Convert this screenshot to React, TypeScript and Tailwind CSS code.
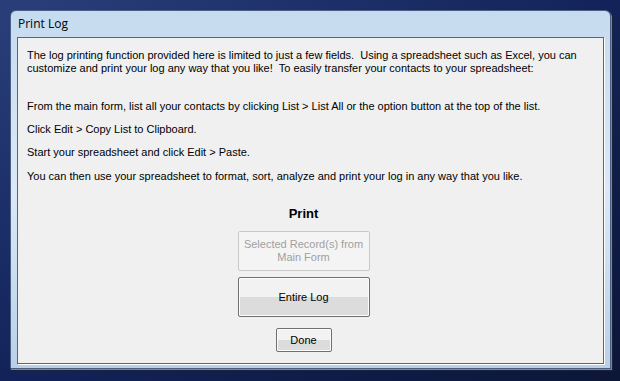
import React from 'react';

export default function App() {
  return (
    <div className="w-[620px] h-[381px] overflow-hidden bg-gradient-to-br from-[#2a3f7a] via-[#13235a] to-[#0b1638] pl-[10px] pt-[10px] font-['Liberation_Sans',Arial,sans-serif]">
      <div className="w-[601px] h-[359px] rounded-t-[6px] bg-gradient-to-b from-[#c6dbef] via-[#dbe9f6] to-[#b9d0e8] border border-[#4a5f86] shadow-[1px_1px_0_#8a8a6a,2px_2px_0_#1d2238] flex flex-col px-[6px] pb-[4px]">
        <div className="h-[26px] flex items-center pl-[1px] text-[12px] text-black font-['Open_Sans','Liberation_Sans',sans-serif]">
          Print Log
        </div>
        <div className="flex-1 border border-[#646464] shadow-[1px_1px_0_#ffffff] bg-[#f0f0f0] pl-[9px] pr-[4px] pt-[11px] text-[11px] text-black">
          <p className="leading-[13px]">
            The log printing function provided here is limited to just a few fields.&nbsp; Using a spreadsheet such as Excel, you can customize and print your log any way that you like!&nbsp; To easily transfer your contacts to your spreadsheet:
          </p>
          <p className="mt-[25px] leading-[13px]">
            From the main form, list all your contacts by clicking List &gt; List All or the option button at the top of the list.
          </p>
          <p className="mt-[10px] leading-[13px]">Click Edit &gt; Copy List to Clipboard.</p>
          <p className="mt-[10px] leading-[13px]">Start your spreadsheet and click Edit &gt; Paste.</p>
          <p className="mt-[11px] leading-[13px]">
            You can then use your spreadsheet to format, sort, analyze and print your log in any way that you like.
          </p>
          <div className="flex flex-col items-center mt-[23px] -ml-[5px] mr-[14px]">
            <div className="text-[13px] font-bold leading-[16px]">Print</div>
            <button
              disabled
              className="mt-[9px] w-[132px] h-[40px] px-0 rounded-[2px] border border-[#c9c9c9] bg-[#f4f4f4] text-[11px] leading-[13px] text-[#a0a0a0]"
            >
              Selected Record(s) from
              <br />
              Main Form
            </button>
            <button className="mt-[6px] w-[132px] h-[40px] rounded-[2px] border border-[#707070] bg-gradient-to-b from-[#f2f2f2] from-50% to-[#dcdcdc] to-50% shadow-[inset_0_0_0_1px_#fcfcfc] text-[11px] text-black">
              Entire Log
            </button>
            <button className="mt-[11px] w-[56px] h-[24px] rounded-[2px] border border-[#707070] bg-gradient-to-b from-[#f2f2f2] from-50% to-[#dcdcdc] to-50% shadow-[inset_0_0_0_1px_#fcfcfc] text-[11px] text-black">
              Done
            </button>
          </div>
        </div>
      </div>
    </div>
  );
}
